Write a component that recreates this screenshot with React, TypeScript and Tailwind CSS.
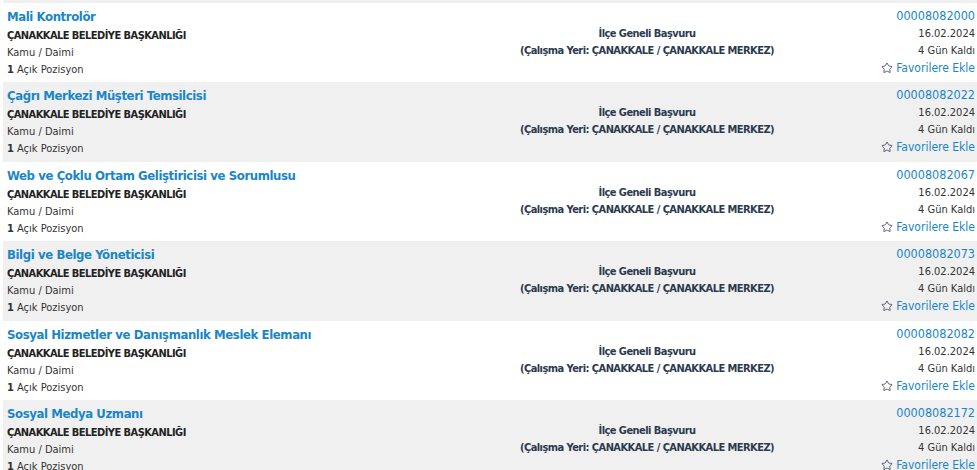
import { Star } from 'lucide-react'

type Ilan = {
  title: string
  kurum: string
  tip: string
  adet: number
  no: string
  tarih: string
  kalan: string
}

const ilanlar: Ilan[] = [
  { title: 'Mali Kontrolör', kurum: 'ÇANAKKALE BELEDİYE BAŞKANLIĞI', tip: 'Kamu / Daimi', adet: 1, no: '00008082000', tarih: '16.02.2024', kalan: '4 Gün Kaldı' },
  { title: 'Çağrı Merkezi Müşteri Temsilcisi', kurum: 'ÇANAKKALE BELEDİYE BAŞKANLIĞI', tip: 'Kamu / Daimi', adet: 1, no: '00008082022', tarih: '16.02.2024', kalan: '4 Gün Kaldı' },
  { title: 'Web ve Çoklu Ortam Geliştiricisi ve Sorumlusu', kurum: 'ÇANAKKALE BELEDİYE BAŞKANLIĞI', tip: 'Kamu / Daimi', adet: 1, no: '00008082067', tarih: '16.02.2024', kalan: '4 Gün Kaldı' },
  { title: 'Bilgi ve Belge Yöneticisi', kurum: 'ÇANAKKALE BELEDİYE BAŞKANLIĞI', tip: 'Kamu / Daimi', adet: 1, no: '00008082073', tarih: '16.02.2024', kalan: '4 Gün Kaldı' },
  { title: 'Sosyal Hizmetler ve Danışmanlık Meslek Elemanı', kurum: 'ÇANAKKALE BELEDİYE BAŞKANLIĞI', tip: 'Kamu / Daimi', adet: 1, no: '00008082082', tarih: '16.02.2024', kalan: '4 Gün Kaldı' },
  { title: 'Sosyal Medya Uzmanı', kurum: 'ÇANAKKALE BELEDİYE BAŞKANLIĞI', tip: 'Kamu / Daimi', adet: 1, no: '00008082172', tarih: '16.02.2024', kalan: '4 Gün Kaldı' },
]

function IlanSatiri({ ilan, gri }: { ilan: Ilan; gri: boolean }) {
  return (
    <div className={`h-[79.4px] shrink-0 flex ${gri ? 'bg-[#f0f0f0]' : 'bg-white'}`}>
      {/* Sol */}
      <div className="flex-1 pl-[4px] pt-[4px]">
        <a className="block text-[13px] font-bold text-[#1a86c7] leading-[19px] tracking-[-0.4px]">{ilan.title}</a>
        <div className="text-[11px] font-bold text-[#222] leading-[16px] mt-[2px] tracking-[-0.55px]">{ilan.kurum}</div>
        <div className="text-[11px] text-[#333] leading-[17px]">{ilan.tip}</div>
        <div className="text-[11px] text-[#333] leading-[17px]">
          <b>{ilan.adet}</b> Açık Pozisyon
        </div>
      </div>

      {/* Orta */}
      <div className="w-[440px] pt-[22px] text-center text-[11px] font-bold text-[#2b3a4f] leading-[17px] tracking-[-0.55px]">
        <div>İlçe Geneli Başvuru</div>
        <div>(Çalışma Yeri: ÇANAKKALE / ÇANAKKALE MERKEZ)</div>
      </div>

      {/* Sağ */}
      <div className="w-[110px] pr-[2px] pt-[4px] text-right">
        <div className="text-[12.5px] text-[#1a86c7] leading-[18px]">{ilan.no}</div>
        <div className="text-[11px] text-[#333] leading-[16px] mt-[1px]">{ilan.tarih}</div>
        <div className="text-[11px] text-[#333] leading-[17px]">{ilan.kalan}</div>
        <a className="flex justify-end items-center gap-[3px] text-[12px] text-[#1a86c7] leading-[18px]">
          <Star size={12} strokeWidth={1.6} className="text-[#2c3e50]" />
          Favorilere Ekle
        </a>
      </div>
    </div>
  )
}

export default function App() {
  return (
    <main
      className="h-screen flex flex-col bg-white pl-[3px] overflow-hidden"
      style={{ fontFamily: '"DejaVu Sans Condensed", "DejaVu Sans", sans-serif' }}
    >
      <div className="h-[3px] shrink-0 bg-[#f0f0f0]" />
      {ilanlar.map((ilan, i) => (
        <IlanSatiri key={ilan.no} ilan={ilan} gri={i % 2 === 1} />
      ))}
    </main>
  )
}
